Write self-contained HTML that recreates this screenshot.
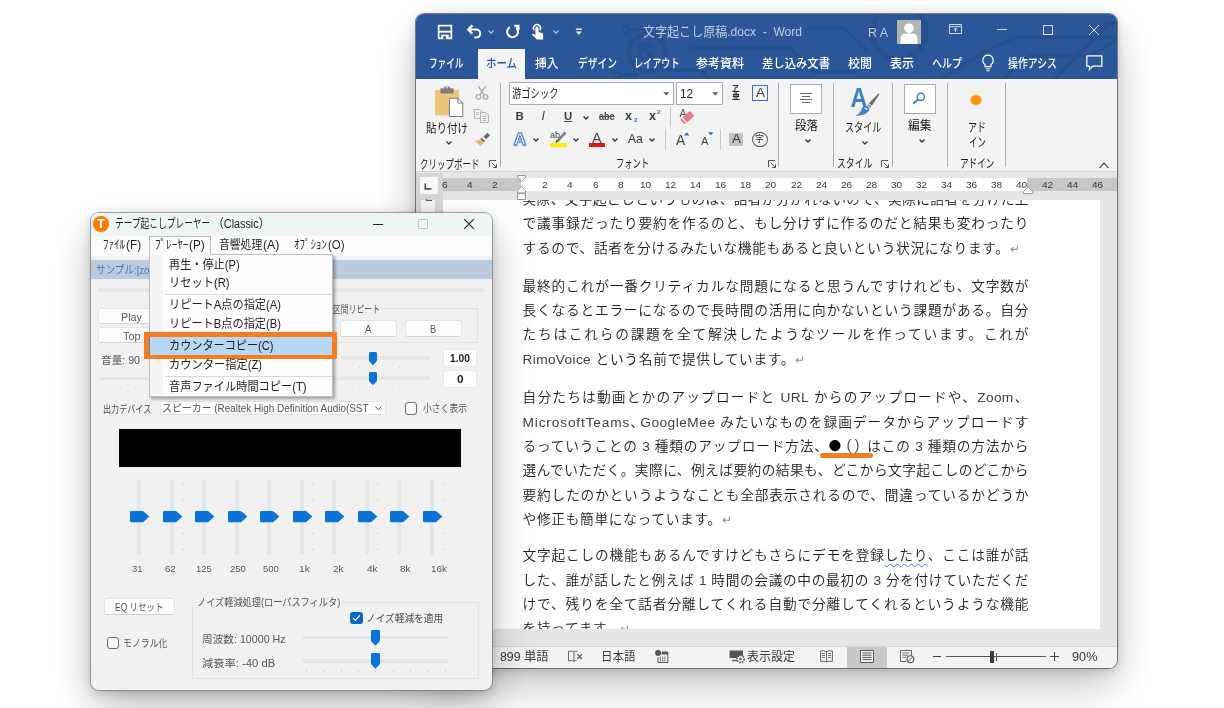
<!DOCTYPE html>
<html lang="ja"><head><meta charset="utf-8"><title>screenshot</title>
<style>
*{box-sizing:border-box;margin:0;padding:0}
html,body{width:1224px;height:708px;overflow:hidden;background:#fff}
body{position:relative;font-family:"Liberation Sans","Noto Sans CJK JP",sans-serif;font-size:12px;color:#222}
.a{position:absolute}
.t{position:absolute;height:20px;line-height:20px;white-space:nowrap;transform-origin:0 50%}
svg{overflow:visible}
#word{left:416px;top:14px;width:701px;height:654px;border-radius:8px;background:#e6e6e6;box-shadow:0 0 0 1px rgba(85,85,85,.75),0 18px 44px rgba(0,0,0,.24),0 3px 12px rgba(0,0,0,.18)}
#player{left:91px;top:213px;width:401px;height:477px;border-radius:8px;background:#f1f1f1;box-shadow:0 0 0 1px rgba(110,110,110,.6),0 18px 44px rgba(0,0,0,.26),0 3px 12px rgba(0,0,0,.2)}
.ln{position:absolute;left:522.5px;width:506px;height:24px;line-height:24px;font-size:13.7px;color:#1c1c1c;white-space:nowrap;text-align:justify;text-align-last:justify;font-weight:350;letter-spacing:0}
.ln.s{text-align-last:left;width:auto;letter-spacing:.7px}
.pm{color:#8c8c8c;font-size:12px;letter-spacing:0}
.la{color:#404040;letter-spacing:.35px}
.cj{font-family:"Noto Sans CJK JP",sans-serif;font-weight:400;color:#000;line-height:1px}
.hw{display:inline-block;width:10px;letter-spacing:0}
.wv{text-decoration:underline wavy #3a6fd8;text-decoration-thickness:1px;text-underline-offset:3px}
#wrap{position:absolute;left:0;top:0;width:1224px;height:708px;overflow:hidden;opacity:.999;will-change:transform}
</style></head><body>
<div id="wrap">
<div id="word" class="a"></div>
<div class="a" style="left:416px;top:14px;width:701.0px;height:65.0px;background:#2b579a;border-radius:8px 8px 0 0"></div>
<div class="a" style="left:416px;top:14px;width:701px;height:65px;overflow:hidden;border-radius:8px 8px 0 0"><svg class="a" style="left:0px;top:0px;" width="701" height="65" viewBox="0 0 701 65"><g fill="none" stroke="#26508f" stroke-width="3.6">
<circle cx="209.5" cy="15.5" r="3.2" stroke-width="2.6"/><path d="M214 15.5 H232" stroke-width="2.6"/>
<circle cx="231.5" cy="38.5" r="18.5" stroke-width="5"/>
<path d="M224 31 L240 47 M224 43 V31 H236" stroke-width="4.4"/>
<circle cx="276.5" cy="34" r="3.2" stroke-width="2.6"/><path d="M281 34 H374 L398 58 H440"/>
<path d="M390 14 H428 L452 38"/>
<circle cx="483" cy="18" r="27" stroke-width="5"/>
<path d="M520 68 L568 38 L600 23 H701"/>
<path d="M636 68 L692 10 H701"/>
<path d="M584 68 L614 42 H674 L701 26"/>
<circle cx="201" cy="61" r="3.2" stroke-width="2.6"/><path d="M205 61 H222 M246 56 H284 L296 68"/>
</g></svg></div>
<svg class="a" style="left:437px;top:24px;" width="16" height="16" viewBox="0 0 16 16"><rect x="1.65" y="1.65" width="12.7" height="12.7" fill="none" stroke="#fff" stroke-width="1.7"/><path d="M1.6 7.7 H14.4" stroke="#fff" stroke-width="1.9"/><rect x="4.2" y="10.6" width="7.6" height="4" fill="#fff"/><rect x="6.3" y="12.2" width="2.6" height="3" fill="#2b579a"/></svg>
<svg class="a" style="left:466px;top:24px;" width="16" height="16" viewBox="0 0 16 16"><path d="M2.4 5.6 H10.2 A4 4 0 0 1 10.2 13.6 H8.2" fill="none" stroke="#fff" stroke-width="2"/><path d="M6.4 1.4 L2.2 5.6 L6.4 9.8" fill="none" stroke="#fff" stroke-width="2.2"/></svg>
<svg class="a" style="left:486.5px;top:29px;" width="8" height="6" viewBox="0 0 8 6"><path d="M1.4 1.5 L4 4.1 L6.6 1.5" fill="none" stroke="#b9c6dd" stroke-width="1.1"/></svg>
<svg class="a" style="left:505px;top:24px;" width="16" height="16" viewBox="0 0 16 16"><path d="M4.9 3.1 A5.4 5.4 0 1 0 11.9 4.6" fill="none" stroke="#fff" stroke-width="2"/><path d="M9.2 1.7 H13.6 V6.1" fill="none" stroke="#fff" stroke-width="1.9"/><path d="M13.4 1.9 L11.2 4.6" stroke="#fff" stroke-width="1.9"/></svg>
<svg class="a" style="left:530px;top:23px;" width="16" height="18" viewBox="0 0 16 18"><path d="M5.4 5.2 A1.6 1.6 0 0 1 8.6 5.2 V9 L12 10 Q13.2 10.5 13.1 11.6 V16.6 H6.8 L2.2 11.8 Q1.8 10.8 2.8 10.8 Q3.8 10.8 5.4 12.2 Z" fill="#fff"/><path d="M4.3 7.4 A3.5 3.5 0 1 1 9.7 7.4" fill="none" stroke="#fff" stroke-width="1.4"/></svg>
<svg class="a" style="left:551.5px;top:29px;" width="8" height="6" viewBox="0 0 8 6"><path d="M1.4 1.5 L4 4.1 L6.6 1.5" fill="none" stroke="#b9c6dd" stroke-width="1.1"/></svg>
<svg class="a" style="left:575px;top:28px;" width="8" height="8" viewBox="0 0 8 8"><path d="M0.8 1.2 H6.8" stroke="#fff" stroke-width="1.3"/><path d="M0.8 3.6 H6.8 L3.8 6.8 Z" fill="#fff"/></svg>
<span class="t" style="transform:scaleX(0.9261);left:643px;top:22.0px;font-size:13px;color:#c3cde0;font-weight:400;">文字起こし原稿.docx&nbsp; -&nbsp; Word</span>
<span class="t" style="transform:scaleX(1.0339);left:868px;top:22.5px;font-size:12px;color:#c3cde0;font-weight:400;">R A</span>
<div class="a" style="left:897px;top:20px;width:24.0px;height:24.0px;background:#b3b3b3"></div>
<svg class="a" style="left:897px;top:20px;" width="24" height="24" viewBox="0 0 24 24"><circle cx="12" cy="8.2" r="4.8" fill="#fff"/><path d="M3.5 24 V19 Q3.5 13.6 9 13.6 H15 Q20.5 13.6 20.5 19 V24 Z" fill="#fff"/></svg>
<svg class="a" style="left:949px;top:24px;" width="14" height="11" viewBox="0 0 14 11"><path d="M0.5 0.5 H12.5 V9.5 H0.5 Z M0.5 2.7 H12.5" fill="none" stroke="#d5ddec" stroke-width="1"/><path d="M6.5 8 V4.3 M4.6 6 L6.5 4.2 L8.4 6" fill="none" stroke="#d5ddec" stroke-width="1"/></svg>
<div class="a" style="left:997px;top:29px;width:10.0px;height:1.0px;background:#d5ddec"></div>
<div class="a" style="left:1043px;top:25px;width:10.0px;height:10.0px;border:1px solid #d5ddec"></div>
<svg class="a" style="left:1089px;top:25px;" width="10" height="10" viewBox="0 0 10 10"><path d="M0 0 L10 10 M10 0 L0 10" stroke="#d5ddec" stroke-width="1"/></svg>
<div class="a" style="left:478px;top:49px;width:47.0px;height:30.0px;background:#f3f3f3"></div>
<span class="t" style="transform:scaleX(0.6898);left:428.5px;top:54.3px;font-size:12.5px;color:#fff;font-weight:500;">ファイル</span>
<span class="t" style="transform:scaleX(0.8347);left:485.5px;top:54.3px;font-size:12.5px;color:#2b579a;font-weight:500;">ホーム</span>
<span class="t" style="transform:scaleX(0.9394);left:535px;top:54.3px;font-size:12.5px;color:#fff;font-weight:500;">挿入</span>
<span class="t" style="transform:scaleX(0.7798);left:577.5px;top:54.3px;font-size:12.5px;color:#fff;font-weight:500;">デザイン</span>
<span class="t" style="transform:scaleX(0.7278);left:633.5px;top:54.3px;font-size:12.5px;color:#fff;font-weight:500;">レイアウト</span>
<span class="t" style="transform:scaleX(0.9597);left:696px;top:54.3px;font-size:12.5px;color:#fff;font-weight:500;">参考資料</span>
<span class="t" style="transform:scaleX(0.9065);left:762px;top:54.3px;font-size:12.5px;color:#fff;font-weight:500;">差し込み文書</span>
<span class="t" style="transform:scaleX(0.9594);left:848px;top:54.3px;font-size:12.5px;color:#fff;font-weight:500;">校閲</span>
<span class="t" style="transform:scaleX(0.9594);left:890px;top:54.3px;font-size:12.5px;color:#fff;font-weight:500;">表示</span>
<span class="t" style="transform:scaleX(0.7997);left:932px;top:54.3px;font-size:12.5px;color:#fff;font-weight:500;">ヘルプ</span>
<svg class="a" style="left:981px;top:54px;" width="14" height="19" viewBox="0 0 14 19"><path d="M7 1.2 A5.2 5.2 0 0 1 10 10.6 V12.6 H4 V10.6 A5.2 5.2 0 0 1 7 1.2 Z" fill="none" stroke="#fff" stroke-width="1.2"/><path d="M4.6 14.8 H9.4 M5.4 16.8 H8.6" stroke="#fff" stroke-width="1.1"/></svg>
<span class="t" style="transform:scaleX(0.7901);left:1008px;top:54.3px;font-size:12.5px;color:#fff;font-weight:500;">操作アシス</span>
<svg class="a" style="left:1086px;top:55px;" width="17" height="17" viewBox="0 0 17 17"><path d="M0.8 0.8 H15.8 V11.2 H6.6 L3.4 14.6 V11.2 H0.8 Z" fill="none" stroke="#fff" stroke-width="1.3"/></svg>
<div class="a" style="left:416px;top:79px;width:701.0px;height:93.0px;background:#f3f3f3;border-bottom:1px solid #d4d4d4"></div>
<div class="a" style="left:478px;top:78px;width:47.0px;height:2.0px;background:#f3f3f3"></div>
<div class="a" style="left:500px;top:83px;width:1.0px;height:84.0px;background:#adadad"></div>
<div class="a" style="left:778px;top:83px;width:1.0px;height:84.0px;background:#adadad"></div>
<div class="a" style="left:833px;top:83px;width:1.0px;height:84.0px;background:#adadad"></div>
<div class="a" style="left:892px;top:83px;width:1.0px;height:84.0px;background:#adadad"></div>
<div class="a" style="left:947px;top:83px;width:1.0px;height:84.0px;background:#adadad"></div>
<div class="a" style="left:1005px;top:83px;width:1.0px;height:84.0px;background:#adadad"></div>
<svg class="a" style="left:435px;top:86px;" width="29" height="31" viewBox="0 0 29 31"><path d="M0 4 H24 V29.5 H0 Z" fill="#ecc57d"/>
<path d="M5.5 2.4 H18.7 V7.4 H5.5 Z" fill="#7a7a7a"/><path d="M9.4 0.6 H14.8 V3 H9.4 Z" fill="#7a7a7a"/><path d="M11 1.8 H13.2" stroke="#f3f3f3" stroke-width="1"/>
<path d="M14.5 12.3 H23 L27.8 17.1 V30.5 H14.5 Z" fill="#fff" stroke="#7a7a7a" stroke-width="1"/><path d="M23 12.3 V17.1 H27.8" fill="none" stroke="#7a7a7a" stroke-width="1"/></svg>
<span class="t" style="transform:scaleX(0.8397);left:426px;top:119.0px;font-size:12.5px;color:#1c1c1c;font-weight:400;">貼り付け</span>
<svg class="a" style="left:444.5px;top:139.5px;" width="8" height="6" viewBox="0 0 8 6"><path d="M1.5 1.5 L4 4.0 L6.5 1.5" fill="none" stroke="#333" stroke-width="1.35"/></svg>
<svg class="a" style="left:475px;top:85px;" width="14" height="15" viewBox="0 0 14 15"><path d="M3.2 0.8 L9.2 10 M10.8 0.8 L4.8 10" stroke="#a6a6a6" stroke-width="1.3" fill="none"/><circle cx="3.4" cy="11.8" r="2.3" fill="none" stroke="#a6a6a6" stroke-width="1.2"/><circle cx="10.6" cy="11.8" r="2.3" fill="none" stroke="#a6a6a6" stroke-width="1.2"/></svg>
<svg class="a" style="left:474px;top:109px;" width="16" height="14" viewBox="0 0 16 14"><path d="M0.5 0.5 H5.5 L8 3 V9.5 H0.5 Z" fill="#f3f3f3" stroke="#b0b0b0"/><path d="M6.5 3.5 H11.5 L14.5 6.5 V13.5 H6.5 Z" fill="#f3f3f3" stroke="#b0b0b0"/><path d="M2 3.5 H5 M2 5.5 H5 M8.5 7.5 H12.5 M8.5 9.5 H12.5 M8.5 11.5 H12.5" stroke="#b0b0b0" stroke-width=".9"/></svg>
<svg class="a" style="left:474px;top:132px;" width="17" height="15" viewBox="0 0 17 15"><path d="M9.5 4.5 L13.5 0.8 L16 3.4 L12.2 7.2 Z" fill="#6b6b6b"/><path d="M7.8 5.6 L11.2 9 L9.6 10.6 L6.2 7.2 Z" fill="#6b6b6b"/><path d="M5.6 7.4 L9.4 11.2 L6.6 14.2 L0.6 8.6 L4 8.8 Z" fill="#e3b76a"/></svg>
<span class="t" style="transform:scaleX(0.7082);left:419.5px;top:154.6px;font-size:12px;color:#1c1c1c;font-weight:400;">クリップボード</span>
<svg class="a" style="left:489px;top:160px;" width="8" height="8" viewBox="0 0 8 8"><path d="M0.5 7 V0.5 H7" fill="none" stroke="#555" stroke-width="1"/><path d="M3 3 L7.2 7.2 M7.5 4.2 V7.5 H4.2" fill="none" stroke="#555" stroke-width="1"/></svg>
<div class="a" style="left:509px;top:82px;width:165.0px;height:23.0px;background:#fff;border:1px solid #ababab"></div>
<span class="t" style="transform:scaleX(0.7748);left:511.5px;top:83.6px;font-size:12px;color:#1c1c1c;font-weight:400;">游ゴシック</span>
<svg class="a" style="left:663px;top:92px;" width="7" height="4" viewBox="0 0 7 4"><path d="M0.3 0.3 H6.3 L3.3 3.5 Z" fill="#555"/></svg>
<div class="a" style="left:676px;top:82px;width:47.0px;height:23.0px;background:#fff;border:1px solid #ababab"></div>
<span class="t" style="transform:scaleX(0.9348);left:679.5px;top:83.8px;font-size:12.5px;color:#1c1c1c;font-weight:400;">12</span>
<svg class="a" style="left:712px;top:92px;" width="7" height="4" viewBox="0 0 7 4"><path d="M0.3 0.3 H6.3 L3.3 3.5 Z" fill="#555"/></svg>
<span class="t" style="transform:scaleX(0.9067);left:731.8px;top:78.6px;font-size:7.5px;color:#2a2a2a;font-weight:700;">ア</span>
<span class="t" style="transform:scaleX(0.8873);left:731.6px;top:86.2px;font-size:9px;color:#2a2a2a;font-weight:700;">亜</span>
<div class="a" style="left:752px;top:85px;width:16.0px;height:15.5px;border:1px solid #3e6db5;background:#f7f7f7"></div>
<span class="t" style="transform:scaleX(1.0378);left:755.5px;top:83.0px;font-size:13px;color:#3b3b3b;font-weight:400;">A</span>
<span class="t" style="transform:scaleX(1.0000);left:515.4px;top:106.0px;font-size:11.5px;color:#404040;font-weight:700;">B</span>
<span class="t" style="transform:scaleX(1.0000);left:541.6px;top:106.0px;font-size:12.5px;color:#404040;font-weight:400;font-style:italic;">I</span>
<span class="t" style="transform:scaleX(0.9865);left:563.6px;top:105.6px;font-size:11.5px;color:#404040;font-weight:700;text-decoration:underline;text-underline-offset:1.2px;text-decoration-thickness:1px;">U</span>
<svg class="a" style="left:581.5px;top:114.5px;" width="8" height="6" viewBox="0 0 8 6"><path d="M1.5 1.5 L4 4.0 L6.5 1.5" fill="none" stroke="#333" stroke-width="1.35"/></svg>
<span class="t" style="transform:scaleX(0.8511);left:599.4px;top:106.4px;font-size:10.5px;color:#4a4a4a;font-weight:700;text-decoration:line-through;text-decoration-thickness:1px;">abc</span>
<span class="t" style="transform:scaleX(1.0067);left:625px;top:106.4px;font-size:12.5px;color:#3b3b3b;font-weight:700;">x</span>
<span class="t" style="transform:scaleX(1.1755);left:633.8px;top:110.0px;font-size:5.5px;color:#2e75c8;font-weight:700;">2</span>
<span class="t" style="transform:scaleX(1.0067);left:649px;top:106.4px;font-size:12.5px;color:#3b3b3b;font-weight:700;">x</span>
<span class="t" style="transform:scaleX(1.1755);left:657.4px;top:101.6px;font-size:5.5px;color:#2e75c8;font-weight:700;">2</span>
<div class="a" style="left:670px;top:106.5px;width:1.0px;height:20.5px;background:#c8c8c8"></div>
<svg class="a" style="left:679px;top:108px;" width="16" height="17" viewBox="0 0 16 17"><text x="0.4" y="8.6" font-size="10.5" font-family="Liberation Sans,sans-serif" fill="#555">A</text><g transform="rotate(-40 8.2 9.6)"><rect x="1.6" y="6.2" width="13.2" height="6.8" rx="1.2" fill="#e8798f"/><rect x="3.6" y="6.2" width="1.3" height="6.8" fill="#f3f3f3"/></g></svg>
<svg class="a" style="left:512px;top:130px;" width="16" height="18" viewBox="0 0 16 18"><text x="8" y="14.6" text-anchor="middle" font-size="17" font-family="Liberation Sans,sans-serif" font-weight="700" fill="none" stroke="#b9d5f4" stroke-width="2.6" stroke-linejoin="round">A</text><text x="8" y="14.6" text-anchor="middle" font-size="17" font-family="Liberation Sans,sans-serif" font-weight="700" fill="#fff" stroke="#2f72c4" stroke-width="0.85" stroke-linejoin="round">A</text></svg>
<svg class="a" style="left:531.5px;top:136.8px;" width="8" height="6" viewBox="0 0 8 6"><path d="M1.5 1.5 L4 4.0 L6.5 1.5" fill="none" stroke="#333" stroke-width="1.35"/></svg>
<span class="t" style="transform:scaleX(0.9453);left:550px;top:125.0px;font-size:9.5px;color:#444;font-weight:400;">ab</span>
<svg class="a" style="left:553px;top:130px;" width="15" height="13" viewBox="0 0 15 13"><path d="M11.6 1.6 L13.4 3.2 L5.6 11.8 L3 12.2 L3.6 10 Z" fill="#7a7a7a"/><path d="M3.6 10 L5.6 11.8 L2.2 13 Z" fill="#555"/></svg>
<div class="a" style="left:550px;top:143px;width:16.5px;height:4.0px;background:#ffee00"></div>
<svg class="a" style="left:571.5px;top:136.8px;" width="8" height="6" viewBox="0 0 8 6"><path d="M1.5 1.5 L4 4.0 L6.5 1.5" fill="none" stroke="#333" stroke-width="1.35"/></svg>
<span class="t" style="transform:scaleX(1.0274);left:592.4px;top:127.8px;font-size:14px;color:#444;font-weight:400;">A</span>
<div class="a" style="left:588.5px;top:143px;width:16.5px;height:4.0px;background:#e8111a"></div>
<svg class="a" style="left:610.5px;top:136.8px;" width="8" height="6" viewBox="0 0 8 6"><path d="M1.5 1.5 L4 4.0 L6.5 1.5" fill="none" stroke="#333" stroke-width="1.35"/></svg>
<span class="t" style="transform:scaleX(0.9741);left:628.1px;top:128.8px;font-size:12.5px;color:#3a3a3a;font-weight:400;">Aa</span>
<svg class="a" style="left:647.8px;top:136.8px;" width="8" height="6" viewBox="0 0 8 6"><path d="M1.5 1.5 L4 4.0 L6.5 1.5" fill="none" stroke="#333" stroke-width="1.35"/></svg>
<div class="a" style="left:665px;top:129px;width:1.0px;height:21.0px;background:#c8c8c8"></div>
<span class="t" style="transform:scaleX(0.9846);left:676.2px;top:129.8px;font-size:14px;color:#444;font-weight:400;">A</span>
<svg class="a" style="left:683.8px;top:131.6px;" width="6" height="4" viewBox="0 0 6 4"><path d="M0 3.6 L2.8 0.2 L5.6 3.6 Z" fill="#2e75c8"/></svg>
<span class="t" style="transform:scaleX(0.9776);left:701px;top:130.8px;font-size:11.5px;color:#444;font-weight:400;">A</span>
<svg class="a" style="left:707.5px;top:132px;" width="6" height="4" viewBox="0 0 6 4"><path d="M0 0.2 H5.6 L2.8 3.6 Z" fill="#2e75c8"/></svg>
<div class="a" style="left:720px;top:129px;width:1.0px;height:21.0px;background:#c8c8c8"></div>
<div class="a" style="left:729px;top:132.5px;width:14.0px;height:13.0px;background:#c2c2c2"></div>
<span class="t" style="transform:scaleX(0.9983);left:731.5px;top:129.2px;font-size:13.5px;color:#3b3b3b;font-weight:400;">A</span>
<div class="a" style="left:752px;top:131.8px;width:15.5px;height:15.4px;border:1px solid #555;border-radius:50%"></div>
<span class="t" style="transform:scaleX(0.9983);left:755.3px;top:129.3px;font-size:9px;color:#333;font-weight:400;">字</span>
<span class="t" style="transform:scaleX(0.6873);left:615.5px;top:153.5px;font-size:12px;color:#1c1c1c;font-weight:400;">フォント</span>
<svg class="a" style="left:767.5px;top:160px;" width="8" height="8" viewBox="0 0 8 8"><path d="M0.5 7 V0.5 H7" fill="none" stroke="#555" stroke-width="1"/><path d="M3 3 L7.2 7.2 M7.5 4.2 V7.5 H4.2" fill="none" stroke="#555" stroke-width="1"/></svg>
<div class="a" style="left:790px;top:83.5px;width:32.0px;height:30.5px;background:#fff;border:1px solid #ababab"></div>
<svg class="a" style="left:799px;top:92px;" width="14" height="12" viewBox="0 0 14 12"><path d="M1 1.5 H13 M3 4.5 H11 M1 7.5 H13 M3 10.5 H11" stroke="#666" stroke-width="1"/></svg>
<span class="t" style="transform:scaleX(0.9194);left:794.5px;top:115.6px;font-size:12.5px;color:#1c1c1c;font-weight:400;">段落</span>
<svg class="a" style="left:803.5px;top:138px;" width="8" height="6" viewBox="0 0 8 6"><path d="M1.5 1.5 L4 4.0 L6.5 1.5" fill="none" stroke="#333" stroke-width="1.35"/></svg>
<svg class="a" style="left:850px;top:86px;" width="30" height="31" viewBox="0 0 30 31"><text transform="translate(0.6,20.6) scale(.86,1)" font-size="27" font-weight="700" font-family="Liberation Sans,sans-serif" fill="#3f7fc6">A</text>
<path d="M28.6 7.2 L29.4 8.6 L22 19.6 L18.6 17.4 Z" fill="#6e6e6e"/><path d="M18.3 17.9 L21.7 20.1 L20.2 22.2 L16.8 20 Z" fill="#a0a0a0"/>
<path d="M16.9 20.4 Q20.6 22 18.6 25.2 Q15 29.6 5.4 30 Q10.4 27.2 11.4 23.6 Q12.8 19.2 16.9 20.4 Z" fill="#3f7fc6"/><path d="M14.4 22.2 Q16.6 22 17.2 24" fill="none" stroke="#fff" stroke-width="1.1"/></svg>
<span class="t" style="transform:scaleX(0.7298);left:844.5px;top:118.0px;font-size:12.5px;color:#1c1c1c;font-weight:400;">スタイル</span>
<svg class="a" style="left:860.5px;top:139.5px;" width="8" height="6" viewBox="0 0 8 6"><path d="M1.5 1.5 L4 4.0 L6.5 1.5" fill="none" stroke="#333" stroke-width="1.35"/></svg>
<span class="t" style="transform:scaleX(0.7393);left:837px;top:153.5px;font-size:12px;color:#1c1c1c;font-weight:400;">スタイル</span>
<svg class="a" style="left:881px;top:160px;" width="8" height="8" viewBox="0 0 8 8"><path d="M0.5 7 V0.5 H7" fill="none" stroke="#555" stroke-width="1"/><path d="M3 3 L7.2 7.2 M7.5 4.2 V7.5 H4.2" fill="none" stroke="#555" stroke-width="1"/></svg>
<div class="a" style="left:904px;top:83.5px;width:32.0px;height:30.5px;background:#fff;border:1px solid #ababab"></div>
<svg class="a" style="left:912px;top:92px;" width="14" height="13" viewBox="0 0 14 13"><circle cx="8.8" cy="4.8" r="3.6" fill="none" stroke="#3f7fc6" stroke-width="1.5"/><path d="M6.2 7.4 L1.2 11.6" stroke="#3f7fc6" stroke-width="2"/></svg>
<span class="t" style="transform:scaleX(0.9394);left:908px;top:115.6px;font-size:12.5px;color:#1c1c1c;font-weight:400;">編集</span>
<svg class="a" style="left:917.5px;top:138px;" width="8" height="6" viewBox="0 0 8 6"><path d="M1.5 1.5 L4 4.0 L6.5 1.5" fill="none" stroke="#333" stroke-width="1.35"/></svg>
<div class="a" style="left:970px;top:94px;width:12.0px;height:12.0px;background:radial-gradient(circle,#ff9300 0,#ff9300 52%,rgba(255,147,0,0) 72%);"></div>
<span class="t" style="transform:scaleX(0.7196);left:968px;top:117.7px;font-size:12.5px;color:#1c1c1c;font-weight:400;">アド</span>
<span class="t" style="transform:scaleX(0.6796);left:968.5px;top:132.5px;font-size:12.5px;color:#1c1c1c;font-weight:400;">イン</span>
<span class="t" style="transform:scaleX(0.7185);left:959.5px;top:153.5px;font-size:12px;color:#1c1c1c;font-weight:400;">アドイン</span>
<svg class="a" style="left:1099px;top:162px;" width="10" height="7" viewBox="0 0 10 7"><path d="M0.6 5.8 L5 1.2 L9.4 5.8" fill="none" stroke="#444" stroke-width="1.2"/></svg>
<div class="a" style="left:416px;top:172px;width:701.0px;height:28.0px;background:#e6e6e6"></div>
<div class="a" style="left:416px;top:172.5px;width:26.5px;height:472.5px;background:#d6d6d6"></div>
<div class="a" style="left:419.5px;top:176.5px;width:18.0px;height:17.0px;background:#f8f8f8"></div>
<svg class="a" style="left:424px;top:183px;" width="8" height="8" viewBox="0 0 8 8"><path d="M1.3 0.2 V5.8 H7.4" fill="none" stroke="#555" stroke-width="1.7"/></svg>
<div class="a" style="left:421px;top:200px;width:14.0px;height:445.0px;background:#f4f4f4"></div>
<div class="a" style="left:426px;top:200.2px;width:6.0px;height:1.2px;background:#555"></div>
<div class="a" style="left:425.5px;top:199px;width:1.5px;height:1.4px;background:#666"></div>
<div class="a" style="left:443px;top:178.3px;width:78.0px;height:12.5px;background:#c6c6c6"></div>
<div class="a" style="left:521px;top:178.3px;width:506.0px;height:12.5px;background:#fff"></div>
<div class="a" style="left:1027px;top:178.3px;width:90.0px;height:12.5px;background:#c6c6c6"></div>
<span class="t" style="transform:scaleX(1.0269);left:441.9px;top:175.0px;font-size:9.8px;color:#383838;font-weight:400;">6</span>
<span class="t" style="transform:scaleX(1.0269);left:467.0px;top:175.0px;font-size:9.8px;color:#383838;font-weight:400;">4</span>
<span class="t" style="transform:scaleX(1.0269);left:492.1px;top:175.0px;font-size:9.8px;color:#383838;font-weight:400;">2</span>
<span class="t" style="transform:scaleX(1.0269);left:542.3px;top:175.0px;font-size:9.8px;color:#383838;font-weight:400;">2</span>
<span class="t" style="transform:scaleX(1.0269);left:567.4px;top:175.0px;font-size:9.8px;color:#383838;font-weight:400;">4</span>
<span class="t" style="transform:scaleX(1.0269);left:592.5px;top:175.0px;font-size:9.8px;color:#383838;font-weight:400;">6</span>
<span class="t" style="transform:scaleX(1.0269);left:617.6px;top:175.0px;font-size:9.8px;color:#383838;font-weight:400;">8</span>
<span class="t" style="transform:scaleX(1.0269);left:639.9px;top:175.0px;font-size:9.8px;color:#383838;font-weight:400;">10</span>
<span class="t" style="transform:scaleX(1.0269);left:665.0px;top:175.0px;font-size:9.8px;color:#383838;font-weight:400;">12</span>
<span class="t" style="transform:scaleX(1.0269);left:690.1px;top:175.0px;font-size:9.8px;color:#383838;font-weight:400;">14</span>
<span class="t" style="transform:scaleX(1.0269);left:715.2px;top:175.0px;font-size:9.8px;color:#383838;font-weight:400;">16</span>
<span class="t" style="transform:scaleX(1.0269);left:740.3px;top:175.0px;font-size:9.8px;color:#383838;font-weight:400;">18</span>
<span class="t" style="transform:scaleX(1.0269);left:765.4px;top:175.0px;font-size:9.8px;color:#383838;font-weight:400;">20</span>
<span class="t" style="transform:scaleX(1.0269);left:790.5px;top:175.0px;font-size:9.8px;color:#383838;font-weight:400;">22</span>
<span class="t" style="transform:scaleX(1.0269);left:815.6px;top:175.0px;font-size:9.8px;color:#383838;font-weight:400;">24</span>
<span class="t" style="transform:scaleX(1.0269);left:840.7px;top:175.0px;font-size:9.8px;color:#383838;font-weight:400;">26</span>
<span class="t" style="transform:scaleX(1.0269);left:865.8px;top:175.0px;font-size:9.8px;color:#383838;font-weight:400;">28</span>
<span class="t" style="transform:scaleX(1.0269);left:890.9px;top:175.0px;font-size:9.8px;color:#383838;font-weight:400;">30</span>
<span class="t" style="transform:scaleX(1.0269);left:916.0px;top:175.0px;font-size:9.8px;color:#383838;font-weight:400;">32</span>
<span class="t" style="transform:scaleX(1.0269);left:941.1px;top:175.0px;font-size:9.8px;color:#383838;font-weight:400;">34</span>
<span class="t" style="transform:scaleX(1.0269);left:966.2px;top:175.0px;font-size:9.8px;color:#383838;font-weight:400;">36</span>
<span class="t" style="transform:scaleX(1.0269);left:991.3px;top:175.0px;font-size:9.8px;color:#383838;font-weight:400;">38</span>
<span class="t" style="transform:scaleX(1.0269);left:1016.4px;top:175.0px;font-size:9.8px;color:#383838;font-weight:400;">40</span>
<span class="t" style="transform:scaleX(1.0269);left:1041.5px;top:175.0px;font-size:9.8px;color:#383838;font-weight:400;">42</span>
<span class="t" style="transform:scaleX(1.0269);left:1066.6px;top:175.0px;font-size:9.8px;color:#383838;font-weight:400;">44</span>
<span class="t" style="transform:scaleX(1.0269);left:1091.7px;top:175.0px;font-size:9.8px;color:#383838;font-weight:400;">46</span>
<svg class="a" style="left:516.5px;top:175px;" width="9" height="25" viewBox="0 0 9 25"><path d="M0.5 0.5 H8.5 V2 L4.5 6.6 L0.5 2 Z" fill="#fff" stroke="#8a8a8a" stroke-width=".9"/><path d="M4.5 11.4 L8.5 15.6 V18 H0.5 V15.6 Z" fill="#fff" stroke="#8a8a8a" stroke-width=".9"/><path d="M0.5 18.6 H8.5 V24.5 H0.5 Z" fill="#fff" stroke="#8a8a8a" stroke-width=".9"/></svg>
<svg class="a" style="left:1023.3px;top:186.3px;" width="11" height="9" viewBox="0 0 11 9"><path d="M5.2 0.8 L9.8 5.4 V7.6 H0.6 V5.4 Z" fill="#fff" stroke="#8a8a8a" stroke-width=".9"/></svg>
<div class="a" style="left:443px;top:200px;width:657.0px;height:428.5px;background:#fff"></div>
<div class="a" style="left:437px;top:200px;width:663px;height:428.5px;overflow:hidden">
<div class="ln" style="left:85.5px;top:-12.1px">実際、文字起こしというものは、話者が分かれないので、実際に話者を分けた上</div>
<div class="ln" style="left:85.5px;top:12.3px">で議事録だったり要約を作るのと、もし分けずに作るのだと結果も変わったり</div>
<div class="ln s" style="left:85.5px;top:36.9px">するので、話者を分けるみたいな機能もあると良いという状況になります。<span class="pm">↵</span></div>
<div class="ln" style="left:85.5px;top:75.0px">最終的これが一番クリティカルな問題になると思うんですけれども、文字数が</div>
<div class="ln" style="left:85.5px;top:98.6px">長くなるとエラーになるので長時間の活用に向かないという課題がある。自分</div>
<div class="ln" style="left:85.5px;top:123.2px">たちはこれらの課題を全て解決したようなツールを作っています。これが</div>
<div class="ln s" style="left:85.5px;top:148.0px"><span class="la">RimoVoice</span> という名前で提供しています。<span class="pm">↵</span></div>
<div class="ln" style="left:85.5px;top:186.4px">自分たちは動画とかのアップロードと <span class="la">URL</span> からのアップロードや、<span class="la">Zoom</span>、</div>
<div class="ln" style="left:85.5px;top:210.5px"><span class="la" style="letter-spacing:.85px">MicrosoftTeams</span><span class="hw">、</span><span class="la" style="letter-spacing:.5px">GoogleMee</span> みたいなものを録画データからアップロードす</div>
<div class="ln" style="left:85.5px;top:234.8px">るっていうことの <span class="la">3</span> 種類のアップロード方法、<span class="cj" style="font-size:12.4px">●</span> <span class="la" style="letter-spacing:3px;color:#555;font-size:15px;line-height:1px;position:relative;top:-.5px">()</span> はこの <span class="la">3</span> 種類の方法から</div>
<div class="ln" style="left:85.5px;top:259.3px">選んでいただく。実際に、例えば要約の結果も、どこから文字起こしのどこから</div>
<div class="ln" style="left:85.5px;top:283.6px">要約したのかというようなことも全部表示されるので、間違っているかどうか</div>
<div class="ln s" style="left:85.5px;top:307.5px">や修正も簡単になっています。<span class="pm">↵</span></div>
<div class="ln" style="left:85.5px;top:344.3px">文字起こしの機能もあるんですけどもさらにデモを登録<span class="wv">したり</span>、ここは誰が話</div>
<div class="ln" style="left:85.5px;top:368.5px">した、誰が話したと例えば <span class="la">1</span> 時間の会議の中の最初の <span class="la">3</span> 分を付けていただくだ</div>
<div class="ln" style="left:85.5px;top:392.6px">けで、残りを全て話者分離してくれる自動で分離してくれるというような機能</div>
<div class="ln s" style="left:85.5px;top:416.9px">を持ってます。<span class="pm">↵</span></div>
</div>
<div class="a" style="left:820px;top:453.2px;width:52.5px;height:4.4px;background:#f47d20;border-radius:2.2px"></div>
<div class="a" style="left:416px;top:646px;width:701.0px;height:22.0px;background:#f3f3f3;border-top:1px solid #d6d6d6;border-radius:0 0 8px 8px"></div>
<span class="t" style="transform:scaleX(0.9829);left:500px;top:646.5px;font-size:12.5px;color:#3a3a3a;font-weight:400;">899 単語</span>
<svg class="a" style="left:568px;top:650px;" width="15" height="13" viewBox="0 0 15 13"><path d="M0.5 1.2 H4.6 Q6 1.2 6 2.4 V11.6 Q6 10.6 4.6 10.6 H0.5 Z" fill="none" stroke="#666" stroke-width="1"/><path d="M6 2.4 Q6 1.2 7.4 1.2 H9.6" fill="none" stroke="#666" stroke-width="1"/><path d="M6 11.6 Q6 10.6 7.4 10.6 H8.6" fill="none" stroke="#666" stroke-width="1"/><path d="M9.4 4.2 L13.8 9 M13.8 4.2 L9.4 9" stroke="#555" stroke-width="1.2"/></svg>
<span class="t" style="transform:scaleX(0.9196);left:601px;top:646.5px;font-size:12.5px;color:#3a3a3a;font-weight:400;">日本語</span>
<svg class="a" style="left:655px;top:650px;" width="14" height="13" viewBox="0 0 14 13"><circle cx="3.1" cy="3.1" r="3" fill="#555"/><path d="M3 7 V12.5 H12.8 V2 H7" fill="none" stroke="#555" stroke-width="1"/><path d="M7 2 H12.8 V4.6 H6.4" fill="#555"/><path d="M4.8 7.2 H11.4 M4.8 9 H11.4 M4.8 10.8 H11.4" stroke="#555" stroke-width="1" stroke-dasharray="1.3 0.9"/></svg>
<svg class="a" style="left:729px;top:650px;" width="17" height="14" viewBox="0 0 17 14"><path d="M0.5 0.5 H14 V8 H0.5 Z" fill="#555"/><path d="M3 10.5 H8" stroke="#555" stroke-width="1.4"/><circle cx="11.5" cy="9" r="3.6" fill="#f3f3f3" stroke="#555" stroke-width="1.6" stroke-dasharray="1.6 1.1"/><circle cx="11.5" cy="9" r="1.3" fill="#555"/></svg>
<span class="t" style="transform:scaleX(0.9597);left:747px;top:646.8px;font-size:12.5px;color:#3a3a3a;font-weight:400;">表示設定</span>
<svg class="a" style="left:820px;top:650px;" width="14" height="13" viewBox="0 0 14 13"><path d="M6.5 1.6 Q3.6 0.2 0.6 1 V11.4 Q3.6 10.6 6.5 12 Q9.4 10.6 12.4 11.4 V1 Q9.4 0.2 6.5 1.6 Z M6.5 1.6 V12" fill="none" stroke="#666" stroke-width="1"/><path d="M2 3.5 H5 M2 5.5 H5 M2 7.5 H5 M8 3.5 H11 M8 5.5 H11 M8 7.5 H11" stroke="#666" stroke-width=".9"/></svg>
<div class="a" style="left:847px;top:647px;width:40.0px;height:21.0px;background:#c8c8c8"></div>
<svg class="a" style="left:860px;top:650px;" width="14" height="13" viewBox="0 0 14 13"><path d="M0.5 0.5 H13.5 V12.5 H0.5 Z" fill="#f3f3f3" stroke="#555" stroke-width="1"/><path d="M2.5 3 H11.5 M2.5 5.2 H11.5 M2.5 7.4 H11.5 M2.5 9.6 H11.5" stroke="#555" stroke-width="1"/></svg>
<svg class="a" style="left:900px;top:650px;" width="15" height="13" viewBox="0 0 15 13"><path d="M0.5 0.5 H11.5 V6 M0.5 0.5 V11.5 H6" fill="none" stroke="#666" stroke-width="1"/><path d="M2.5 3 H9.5 M2.5 5.2 H8 M2.5 7.4 H6" stroke="#666" stroke-width=".9"/><circle cx="10.4" cy="9.2" r="3.4" fill="#f3f3f3" stroke="#555" stroke-width="1.1"/><path d="M8 11.4 L12.8 7" stroke="#555" stroke-width="1"/></svg>
<div class="a" style="left:933px;top:656px;width:7.5px;height:1.0px;background:#444"></div>
<div class="a" style="left:946px;top:656px;width:100.0px;height:1.0px;background:#555"></div>
<div class="a" style="left:996px;top:652.5px;width:1.0px;height:8.0px;background:#555"></div>
<div class="a" style="left:989.5px;top:650.5px;width:4.5px;height:12.0px;background:#3c3c3c"></div>
<div class="a" style="left:1050px;top:656px;width:9.0px;height:1.0px;background:#444"></div>
<div class="a" style="left:1054px;top:652px;width:1.0px;height:9.0px;background:#444"></div>
<span class="t" style="transform:scaleX(1.0187);left:1071.5px;top:646.8px;font-size:12.5px;color:#3a3a3a;font-weight:400;">90%</span><div id="player" class="a"></div>
<div class="a" style="left:91px;top:213px;width:401.0px;height:23.0px;background:#eef6f3;border-radius:8px 8px 0 0"></div>
<div class="a" style="left:93.4px;top:216.2px;width:15.4px;height:15.4px;background:#ff7a00;border-radius:50%"></div>
<span class="t" style="transform:scaleX(1.0209);left:97.2px;top:214.2px;font-size:12.5px;color:#fff;font-weight:700;">T</span>
<span class="t" style="transform:scaleX(0.6968);left:115px;top:214.4px;font-size:12.5px;color:#1a1a1a;font-weight:400;">テープ起こしプレーヤー</span>
<span class="t" style="transform:scaleX(0.8653);left:212.5px;top:214.4px;font-size:12.5px;color:#1a1a1a;font-weight:400;">（Classic）</span>
<div class="a" style="left:373px;top:223.7px;width:10.2px;height:1.1px;background:#222"></div>
<div class="a" style="left:418px;top:219.3px;width:9.6px;height:9.3px;border:1px solid #c4c4c4;border-radius:1px"></div>
<svg class="a" style="left:464px;top:219px;" width="10" height="10" viewBox="0 0 10 10"><path d="M0.2 0.2 L9.8 9.8 M9.8 0.2 L0.2 9.8" stroke="#222" stroke-width="1.1"/></svg>
<div class="a" style="left:91px;top:236px;width:401.0px;height:19.5px;background:#fbfbfb"></div>
<span class="t" style="transform:scaleX(0.9161);left:103px;top:235.0px;font-size:12px;color:#1f1f1f;font-weight:400;">ﾌｧｲﾙ</span>
<span class="t" style="transform:scaleX(0.9456);left:125.9px;top:235.0px;font-size:12.5px;color:#1f1f1f;font-weight:400;">(F)</span>
<span class="t" style="transform:scaleX(0.8997);left:218.5px;top:235.0px;font-size:12px;color:#1f1f1f;font-weight:400;">音響処理</span>
<span class="t" style="transform:scaleX(0.9837);left:262.6px;top:235.0px;font-size:12.5px;color:#1f1f1f;font-weight:400;">(A)</span>
<span class="t" style="transform:scaleX(0.9163);left:293.7px;top:235.0px;font-size:12px;color:#1f1f1f;font-weight:400;">ｵﾌﾟｼｮﾝ</span>
<span class="t" style="transform:scaleX(0.9135);left:327.6px;top:235.0px;font-size:12.5px;color:#1f1f1f;font-weight:400;">(O)</span>
<div class="a" style="left:91px;top:259.6px;width:401.0px;height:19.2px;background:#bccbdc"></div>
<span class="t" style="transform:scaleX(0.8317);left:95.6px;top:259.7px;font-size:11.5px;color:#3b7bd0;font-weight:400;">サンプル:[zo</span>
<div class="a" style="left:97.4px;top:287.6px;width:386.2px;height:4.0px;background:#e3e6e7;border-radius:2px"></div>
<div class="a" style="left:97.5px;top:308.3px;width:102.5px;height:15.9px;background:#fdfdfd;border:1px solid #e3e3e3;border-bottom-color:#d2d2d2;border-radius:3.5px"></div>
<span class="t" style="transform:scaleX(1.0275);left:120.5px;top:307.2px;font-size:10.5px;color:#555;font-weight:400;">Play</span>
<div class="a" style="left:97.5px;top:327.2px;width:102.5px;height:16.2px;background:#fdfdfd;border:1px solid #e3e3e3;border-bottom-color:#d2d2d2;border-radius:3.5px"></div>
<span class="t" style="transform:scaleX(1.0332);left:122.5px;top:325.6px;font-size:10.5px;color:#555;font-weight:400;">Top</span>
<span class="t" style="transform:scaleX(1.0126);left:100.5px;top:350.2px;font-size:10.5px;color:#555;font-weight:400;">音量: 90</span>
<div class="a" style="left:100px;top:376.6px;width:240.0px;height:3.8px;background:#e3e6e7;border-radius:2px"></div>
<div class="a" style="left:105.0px;top:388.3px;width:1.0px;height:1.0px;background:#cfcfcf"></div>
<div class="a" style="left:120.2px;top:388.3px;width:1.0px;height:1.0px;background:#cfcfcf"></div>
<div class="a" style="left:135.4px;top:388.3px;width:1.0px;height:1.0px;background:#cfcfcf"></div>
<div class="a" style="left:150.6px;top:388.3px;width:1.0px;height:1.0px;background:#cfcfcf"></div>
<div class="a" style="left:330px;top:308.3px;width:147.5px;height:34.9px;border:1px solid #e2e2e2"></div>
<div class="a" style="left:331px;top:300px;width:51.0px;height:16.0px;background:#f0f0f0"></div>
<span class="t" style="transform:scaleX(0.7460);left:333px;top:298.6px;font-size:10.5px;color:#555;font-weight:400;">区間リピート</span>
<div class="a" style="left:340.3px;top:319.8px;width:57.1px;height:17.6px;background:#fdfdfd;border:1px solid #e3e3e3;border-bottom-color:#d2d2d2;border-radius:3.5px"></div>
<span class="t" style="transform:scaleX(0.9265);left:364.5px;top:319.0px;font-size:10.5px;color:#555;font-weight:400;">A</span>
<div class="a" style="left:405.2px;top:319.8px;width:57.2px;height:17.6px;background:#fdfdfd;border:1px solid #e3e3e3;border-bottom-color:#d2d2d2;border-radius:3.5px"></div>
<span class="t" style="transform:scaleX(0.8837);left:429.8px;top:319.0px;font-size:10.5px;color:#555;font-weight:400;">B</span>
<div class="a" style="left:340px;top:356px;width:91.0px;height:3.6px;background:#e3e6e7;border-radius:2px"></div>
<svg class="a" style="left:368.8px;top:351.7px;" width="8" height="13.4" viewBox="0 0 8 13.4"><path d="M0 1.5 Q0 0 1.5 0 H6.5 Q8 0 8 1.5 V9 L4 13.2 L0 9 Z" fill="#0a73d8"/></svg>
<div class="a" style="left:345.5px;top:366.5px;width:1.0px;height:1.0px;background:#cfcfcf"></div>
<div class="a" style="left:358.95px;top:366.5px;width:1.0px;height:1.0px;background:#cfcfcf"></div>
<div class="a" style="left:372.4px;top:366.5px;width:1.0px;height:1.0px;background:#cfcfcf"></div>
<div class="a" style="left:385.85px;top:366.5px;width:1.0px;height:1.0px;background:#cfcfcf"></div>
<div class="a" style="left:399.3px;top:366.5px;width:1.0px;height:1.0px;background:#cfcfcf"></div>
<div class="a" style="left:412.75px;top:366.5px;width:1.0px;height:1.0px;background:#cfcfcf"></div>
<div class="a" style="left:426.2px;top:366.5px;width:1.0px;height:1.0px;background:#cfcfcf"></div>
<div class="a" style="left:340px;top:376.2px;width:91.0px;height:3.6px;background:#e3e6e7;border-radius:2px"></div>
<svg class="a" style="left:368.8px;top:371.6px;" width="8" height="13.4" viewBox="0 0 8 13.4"><path d="M0 1.5 Q0 0 1.5 0 H6.5 Q8 0 8 1.5 V9 L4 13.2 L0 9 Z" fill="#0a73d8"/></svg>
<div class="a" style="left:345.5px;top:386.1px;width:1.0px;height:1.0px;background:#cfcfcf"></div>
<div class="a" style="left:358.95px;top:386.1px;width:1.0px;height:1.0px;background:#cfcfcf"></div>
<div class="a" style="left:372.4px;top:386.1px;width:1.0px;height:1.0px;background:#cfcfcf"></div>
<div class="a" style="left:385.85px;top:386.1px;width:1.0px;height:1.0px;background:#cfcfcf"></div>
<div class="a" style="left:399.3px;top:386.1px;width:1.0px;height:1.0px;background:#cfcfcf"></div>
<div class="a" style="left:412.75px;top:386.1px;width:1.0px;height:1.0px;background:#cfcfcf"></div>
<div class="a" style="left:426.2px;top:386.1px;width:1.0px;height:1.0px;background:#cfcfcf"></div>
<div class="a" style="left:443.2px;top:348.6px;width:34.2px;height:18.0px;background:#fff;border:1px solid #e9e9e9;border-radius:3px"></div>
<span class="t" style="transform:scaleX(0.9243);left:450px;top:347.8px;font-size:11px;color:#222;font-weight:700;">1.00</span>
<div class="a" style="left:443.2px;top:369.7px;width:34.2px;height:17.9px;background:#fff;border:1px solid #e9e9e9;border-radius:3px"></div>
<span class="t" style="transform:scaleX(1.0776);left:456.6px;top:368.8px;font-size:11px;color:#222;font-weight:700;">0</span>
<span class="t" style="transform:scaleX(0.7705);left:102.7px;top:398.9px;font-size:10.5px;color:#4a4a4a;font-weight:400;">出力デバイス</span>
<div class="a" style="left:159.6px;top:400.6px;width:226.8px;height:14.2px;background:#fdfdfd;border:1px solid #e4e4e4;border-radius:2px"></div>
<span class="t" style="transform:scaleX(0.9436);left:161.5px;top:398.0px;font-size:10.5px;color:#555;font-weight:400;">スピーカー (Realtek High Definition Audio(SST</span>
<svg class="a" style="left:374.5px;top:405.5px;" width="7" height="5" viewBox="0 0 7 5"><path d="M0.4 0.6 L3.4 3.8 L6.4 0.6" fill="none" stroke="#555" stroke-width="1"/></svg>
<div class="a" style="left:405.2px;top:402.4px;width:12.3px;height:12.3px;background:#f7f7f7;border:1px solid #6a6a6a;border-radius:3px"></div>
<span class="t" style="transform:scaleX(0.8381);left:422.5px;top:398.4px;font-size:10.5px;color:#555;font-weight:400;">小さく表示</span>
<div class="a" style="left:119px;top:428.6px;width:341.7px;height:38.6px;background:#000"></div>
<div class="a" style="left:137.1px;top:478.8px;width:4.0px;height:76.2px;background:#e3e6e7;border-radius:2px"></div>
<div class="a" style="left:149.9px;top:483.9px;width:1.5px;height:1.0px;background:#d6d6d6"></div>
<div class="a" style="left:149.9px;top:500.15px;width:1.5px;height:1.0px;background:#d6d6d6"></div>
<div class="a" style="left:149.9px;top:532.65px;width:1.5px;height:1.0px;background:#d6d6d6"></div>
<div class="a" style="left:149.9px;top:548.9px;width:1.5px;height:1.0px;background:#d6d6d6"></div>
<svg class="a" style="left:130.4px;top:511.1px;" width="19.4" height="11.2" viewBox="0 0 19.4 11.2"><path d="M1.2 0 H13 L19.4 5.6 L13 11.2 H1.2 Q0 11.2 0 10 V1.2 Q0 0 1.2 0 Z" fill="#0a73d8"/></svg>
<span class="t" style="transform:scaleX(0.9719);left:131.7px;top:558.6px;font-size:9.8px;color:#555;font-weight:400;">31</span>
<div class="a" style="left:169.6px;top:478.8px;width:4.0px;height:76.2px;background:#e3e6e7;border-radius:2px"></div>
<div class="a" style="left:182.4px;top:483.9px;width:1.5px;height:1.0px;background:#d6d6d6"></div>
<div class="a" style="left:182.4px;top:500.15px;width:1.5px;height:1.0px;background:#d6d6d6"></div>
<div class="a" style="left:182.4px;top:532.65px;width:1.5px;height:1.0px;background:#d6d6d6"></div>
<div class="a" style="left:182.4px;top:548.9px;width:1.5px;height:1.0px;background:#d6d6d6"></div>
<svg class="a" style="left:162.9px;top:511.1px;" width="19.4" height="11.2" viewBox="0 0 19.4 11.2"><path d="M1.2 0 H13 L19.4 5.6 L13 11.2 H1.2 Q0 11.2 0 10 V1.2 Q0 0 1.2 0 Z" fill="#0a73d8"/></svg>
<span class="t" style="transform:scaleX(0.9811);left:165.2px;top:558.6px;font-size:9.8px;color:#555;font-weight:400;">62</span>
<div class="a" style="left:202.1px;top:478.8px;width:4.0px;height:76.2px;background:#e3e6e7;border-radius:2px"></div>
<div class="a" style="left:214.9px;top:483.9px;width:1.5px;height:1.0px;background:#d6d6d6"></div>
<div class="a" style="left:214.9px;top:500.15px;width:1.5px;height:1.0px;background:#d6d6d6"></div>
<div class="a" style="left:214.9px;top:532.65px;width:1.5px;height:1.0px;background:#d6d6d6"></div>
<div class="a" style="left:214.9px;top:548.9px;width:1.5px;height:1.0px;background:#d6d6d6"></div>
<svg class="a" style="left:195.4px;top:511.1px;" width="19.4" height="11.2" viewBox="0 0 19.4 11.2"><path d="M1.2 0 H13 L19.4 5.6 L13 11.2 H1.2 Q0 11.2 0 10 V1.2 Q0 0 1.2 0 Z" fill="#0a73d8"/></svg>
<span class="t" style="transform:scaleX(0.9658);left:196.2px;top:558.6px;font-size:9.8px;color:#555;font-weight:400;">125</span>
<div class="a" style="left:234.6px;top:478.8px;width:4.0px;height:76.2px;background:#e3e6e7;border-radius:2px"></div>
<div class="a" style="left:247.4px;top:483.9px;width:1.5px;height:1.0px;background:#d6d6d6"></div>
<div class="a" style="left:247.4px;top:500.15px;width:1.5px;height:1.0px;background:#d6d6d6"></div>
<div class="a" style="left:247.4px;top:532.65px;width:1.5px;height:1.0px;background:#d6d6d6"></div>
<div class="a" style="left:247.4px;top:548.9px;width:1.5px;height:1.0px;background:#d6d6d6"></div>
<svg class="a" style="left:227.9px;top:511.1px;" width="19.4" height="11.2" viewBox="0 0 19.4 11.2"><path d="M1.2 0 H13 L19.4 5.6 L13 11.2 H1.2 Q0 11.2 0 10 V1.2 Q0 0 1.2 0 Z" fill="#0a73d8"/></svg>
<span class="t" style="transform:scaleX(0.9719);left:229.7px;top:558.6px;font-size:9.8px;color:#555;font-weight:400;">250</span>
<div class="a" style="left:267.1px;top:478.8px;width:4.0px;height:76.2px;background:#e3e6e7;border-radius:2px"></div>
<div class="a" style="left:279.90000000000003px;top:483.9px;width:1.5px;height:1.0px;background:#d6d6d6"></div>
<div class="a" style="left:279.90000000000003px;top:500.15px;width:1.5px;height:1.0px;background:#d6d6d6"></div>
<div class="a" style="left:279.90000000000003px;top:532.65px;width:1.5px;height:1.0px;background:#d6d6d6"></div>
<div class="a" style="left:279.90000000000003px;top:548.9px;width:1.5px;height:1.0px;background:#d6d6d6"></div>
<svg class="a" style="left:260.40000000000003px;top:511.1px;" width="19.4" height="11.2" viewBox="0 0 19.4 11.2"><path d="M1.2 0 H13 L19.4 5.6 L13 11.2 H1.2 Q0 11.2 0 10 V1.2 Q0 0 1.2 0 Z" fill="#0a73d8"/></svg>
<span class="t" style="transform:scaleX(0.9719);left:263.2px;top:558.6px;font-size:9.8px;color:#555;font-weight:400;">500</span>
<div class="a" style="left:299.6px;top:478.8px;width:4.0px;height:76.2px;background:#e3e6e7;border-radius:2px"></div>
<div class="a" style="left:312.40000000000003px;top:483.9px;width:1.5px;height:1.0px;background:#d6d6d6"></div>
<div class="a" style="left:312.40000000000003px;top:500.15px;width:1.5px;height:1.0px;background:#d6d6d6"></div>
<div class="a" style="left:312.40000000000003px;top:532.65px;width:1.5px;height:1.0px;background:#d6d6d6"></div>
<div class="a" style="left:312.40000000000003px;top:548.9px;width:1.5px;height:1.0px;background:#d6d6d6"></div>
<svg class="a" style="left:292.90000000000003px;top:511.1px;" width="19.4" height="11.2" viewBox="0 0 19.4 11.2"><path d="M1.2 0 H13 L19.4 5.6 L13 11.2 H1.2 Q0 11.2 0 10 V1.2 Q0 0 1.2 0 Z" fill="#0a73d8"/></svg>
<span class="t" style="transform:scaleX(1.0329);left:299.4px;top:558.6px;font-size:9.8px;color:#555;font-weight:400;">1k</span>
<div class="a" style="left:332.1px;top:478.8px;width:4.0px;height:76.2px;background:#e3e6e7;border-radius:2px"></div>
<div class="a" style="left:344.90000000000003px;top:483.9px;width:1.5px;height:1.0px;background:#d6d6d6"></div>
<div class="a" style="left:344.90000000000003px;top:500.15px;width:1.5px;height:1.0px;background:#d6d6d6"></div>
<div class="a" style="left:344.90000000000003px;top:532.65px;width:1.5px;height:1.0px;background:#d6d6d6"></div>
<div class="a" style="left:344.90000000000003px;top:548.9px;width:1.5px;height:1.0px;background:#d6d6d6"></div>
<svg class="a" style="left:325.40000000000003px;top:511.1px;" width="19.4" height="11.2" viewBox="0 0 19.4 11.2"><path d="M1.2 0 H13 L19.4 5.6 L13 11.2 H1.2 Q0 11.2 0 10 V1.2 Q0 0 1.2 0 Z" fill="#0a73d8"/></svg>
<span class="t" style="transform:scaleX(1.0232);left:333.0px;top:558.6px;font-size:9.8px;color:#555;font-weight:400;">2k</span>
<div class="a" style="left:364.6px;top:478.8px;width:4.0px;height:76.2px;background:#e3e6e7;border-radius:2px"></div>
<div class="a" style="left:377.40000000000003px;top:483.9px;width:1.5px;height:1.0px;background:#d6d6d6"></div>
<div class="a" style="left:377.40000000000003px;top:500.15px;width:1.5px;height:1.0px;background:#d6d6d6"></div>
<div class="a" style="left:377.40000000000003px;top:532.65px;width:1.5px;height:1.0px;background:#d6d6d6"></div>
<div class="a" style="left:377.40000000000003px;top:548.9px;width:1.5px;height:1.0px;background:#d6d6d6"></div>
<svg class="a" style="left:357.90000000000003px;top:511.1px;" width="19.4" height="11.2" viewBox="0 0 19.4 11.2"><path d="M1.2 0 H13 L19.4 5.6 L13 11.2 H1.2 Q0 11.2 0 10 V1.2 Q0 0 1.2 0 Z" fill="#0a73d8"/></svg>
<span class="t" style="transform:scaleX(1.0232);left:366.5px;top:558.6px;font-size:9.8px;color:#555;font-weight:400;">4k</span>
<div class="a" style="left:397.1px;top:478.8px;width:4.0px;height:76.2px;background:#e3e6e7;border-radius:2px"></div>
<div class="a" style="left:409.90000000000003px;top:483.9px;width:1.5px;height:1.0px;background:#d6d6d6"></div>
<div class="a" style="left:409.90000000000003px;top:500.15px;width:1.5px;height:1.0px;background:#d6d6d6"></div>
<div class="a" style="left:409.90000000000003px;top:532.65px;width:1.5px;height:1.0px;background:#d6d6d6"></div>
<div class="a" style="left:409.90000000000003px;top:548.9px;width:1.5px;height:1.0px;background:#d6d6d6"></div>
<svg class="a" style="left:390.40000000000003px;top:511.1px;" width="19.4" height="11.2" viewBox="0 0 19.4 11.2"><path d="M1.2 0 H13 L19.4 5.6 L13 11.2 H1.2 Q0 11.2 0 10 V1.2 Q0 0 1.2 0 Z" fill="#0a73d8"/></svg>
<span class="t" style="transform:scaleX(1.0232);left:400.1px;top:558.6px;font-size:9.8px;color:#555;font-weight:400;">8k</span>
<div class="a" style="left:429.6px;top:478.8px;width:4.0px;height:76.2px;background:#e3e6e7;border-radius:2px"></div>
<div class="a" style="left:442.40000000000003px;top:483.9px;width:1.5px;height:1.0px;background:#d6d6d6"></div>
<div class="a" style="left:442.40000000000003px;top:500.15px;width:1.5px;height:1.0px;background:#d6d6d6"></div>
<div class="a" style="left:442.40000000000003px;top:532.65px;width:1.5px;height:1.0px;background:#d6d6d6"></div>
<div class="a" style="left:442.40000000000003px;top:548.9px;width:1.5px;height:1.0px;background:#d6d6d6"></div>
<svg class="a" style="left:422.90000000000003px;top:511.1px;" width="19.4" height="11.2" viewBox="0 0 19.4 11.2"><path d="M1.2 0 H13 L19.4 5.6 L13 11.2 H1.2 Q0 11.2 0 10 V1.2 Q0 0 1.2 0 Z" fill="#0a73d8"/></svg>
<span class="t" style="transform:scaleX(1.0065);left:431.0px;top:558.6px;font-size:9.8px;color:#555;font-weight:400;">16k</span>
<div class="a" style="left:104px;top:598.4px;width:71.0px;height:16.8px;background:#fdfdfd;border:1px solid #e3e3e3;border-bottom-color:#d2d2d2;border-radius:3.5px"></div>
<span class="t" style="transform:scaleX(0.8071);left:115px;top:597.0px;font-size:10.5px;color:#555;font-weight:400;">EQ リセット</span>
<div class="a" style="left:107.4px;top:637.2px;width:12.0px;height:11.8px;background:#f7f7f7;border:1px solid #6a6a6a;border-radius:3px"></div>
<span class="t" style="transform:scaleX(0.8457);left:122.6px;top:632.8px;font-size:10.5px;color:#555;font-weight:400;">モノラル化</span>
<div class="a" style="left:192.3px;top:602.4px;width:286.9px;height:76.8px;border:1px solid #e2e2e2"></div>
<div class="a" style="left:195px;top:594px;width:146.5px;height:16.0px;background:#f0f0f0"></div>
<span class="t" style="transform:scaleX(0.8738);left:196.6px;top:592.3px;font-size:10.5px;color:#555;font-weight:400;">ノイズ軽減処理(ローパスフィルタ)</span>
<div class="a" style="left:349.8px;top:611.5px;width:12.8px;height:12.4px;background:#0a66c8;border-radius:3px"></div>
<svg class="a" style="left:352px;top:614px;" width="9" height="8" viewBox="0 0 9 8"><path d="M1 4 L3.4 6.4 L7.8 1.4" fill="none" stroke="#fff" stroke-width="1.2"/></svg>
<span class="t" style="transform:scaleX(0.9213);left:366.3px;top:607.6px;font-size:10.5px;color:#4a4a4a;font-weight:400;">ノイズ軽減を適用</span>
<span class="t" style="transform:scaleX(1.0158);left:201.8px;top:628.9px;font-size:10.5px;color:#555;font-weight:400;">周波数: 10000 Hz</span>
<span class="t" style="transform:scaleX(1.0720);left:201.8px;top:652.8px;font-size:10.5px;color:#555;font-weight:400;">減衰率: -40 dB</span>
<div class="a" style="left:302px;top:635.8px;width:147.0px;height:3.6px;background:#e3e6e7;border-radius:2px"></div>
<svg class="a" style="left:371px;top:629.8px;" width="9" height="15.8" viewBox="0 0 9 15.8"><path d="M0 1.5 Q0 0 1.5 0 H7.5 Q9 0 9 1.5 V11 L4.5 15.8 L0 11 Z" fill="#0a73d8"/></svg>
<div class="a" style="left:306.2px;top:646.5999999999999px;width:1.0px;height:2.0px;background:#d4d4d4"></div>
<div class="a" style="left:323.5px;top:646.5999999999999px;width:1.0px;height:2.0px;background:#d4d4d4"></div>
<div class="a" style="left:340.8px;top:646.5999999999999px;width:1.0px;height:2.0px;background:#d4d4d4"></div>
<div class="a" style="left:358.1px;top:646.5999999999999px;width:1.0px;height:2.0px;background:#d4d4d4"></div>
<div class="a" style="left:375.4px;top:646.5999999999999px;width:1.0px;height:2.0px;background:#d4d4d4"></div>
<div class="a" style="left:392.7px;top:646.5999999999999px;width:1.0px;height:2.0px;background:#d4d4d4"></div>
<div class="a" style="left:410.0px;top:646.5999999999999px;width:1.0px;height:2.0px;background:#d4d4d4"></div>
<div class="a" style="left:427.3px;top:646.5999999999999px;width:1.0px;height:2.0px;background:#d4d4d4"></div>
<div class="a" style="left:444.6px;top:646.5999999999999px;width:1.0px;height:2.0px;background:#d4d4d4"></div>
<div class="a" style="left:302px;top:659.2px;width:147.0px;height:3.6px;background:#e3e6e7;border-radius:2px"></div>
<svg class="a" style="left:371px;top:653.3px;" width="9" height="15.8" viewBox="0 0 9 15.8"><path d="M0 1.5 Q0 0 1.5 0 H7.5 Q9 0 9 1.5 V11 L4.5 15.8 L0 11 Z" fill="#0a73d8"/></svg>
<div class="a" style="left:306.2px;top:670.0px;width:1.0px;height:2.0px;background:#d4d4d4"></div>
<div class="a" style="left:323.5px;top:670.0px;width:1.0px;height:2.0px;background:#d4d4d4"></div>
<div class="a" style="left:340.8px;top:670.0px;width:1.0px;height:2.0px;background:#d4d4d4"></div>
<div class="a" style="left:358.1px;top:670.0px;width:1.0px;height:2.0px;background:#d4d4d4"></div>
<div class="a" style="left:375.4px;top:670.0px;width:1.0px;height:2.0px;background:#d4d4d4"></div>
<div class="a" style="left:392.7px;top:670.0px;width:1.0px;height:2.0px;background:#d4d4d4"></div>
<div class="a" style="left:410.0px;top:670.0px;width:1.0px;height:2.0px;background:#d4d4d4"></div>
<div class="a" style="left:427.3px;top:670.0px;width:1.0px;height:2.0px;background:#d4d4d4"></div>
<div class="a" style="left:444.6px;top:670.0px;width:1.0px;height:2.0px;background:#d4d4d4"></div>
<div class="a" style="left:149.4px;top:254px;width:183.8px;height:142.8px;background:#fdfdfd;border:1px solid #bdbdbd;box-shadow:2px 2px 3px rgba(0,0,0,.35)"></div>
<div class="a" style="left:150.4px;top:255px;width:12.6px;height:140.8px;background:#f5f5f5"></div>
<div class="a" style="left:149.4px;top:236px;width:62.1px;height:19.0px;background:#fdfdfd;border:1px solid #bdbdbd;border-bottom:none"></div>
<span class="t" style="transform:scaleX(0.9246);left:155px;top:235.0px;font-size:12px;color:#1f1f1f;font-weight:400;">ﾌﾟﾚｰﾔｰ</span>
<span class="t" style="transform:scaleX(0.9357);left:189.2px;top:235.0px;font-size:12.5px;color:#1f1f1f;font-weight:400;">(P)</span>
<span class="t" style="transform:scaleX(0.9289);left:169px;top:254.5px;font-size:12px;color:#1f1f1f;font-weight:400;">再生・停止(P)</span>
<span class="t" style="transform:scaleX(0.9355);left:169px;top:273.2px;font-size:12px;color:#1f1f1f;font-weight:400;">リセット(R)</span>
<div class="a" style="left:165px;top:294px;width:167.0px;height:1.0px;background:#d9d9d9"></div>
<span class="t" style="transform:scaleX(0.9332);left:169px;top:295.2px;font-size:12px;color:#1f1f1f;font-weight:400;">リピートA点の指定(A)</span>
<span class="t" style="transform:scaleX(0.9332);left:169px;top:314.0px;font-size:12px;color:#1f1f1f;font-weight:400;">リピートB点の指定(B)</span>
<div class="a" style="left:144px;top:332.2px;width:192.8px;height:27.3px;background:#f57c1f"></div>
<div class="a" style="left:148.6px;top:336.8px;width:183.4px;height:18.2px;background:#b7d7f3;border-left:1.4px solid #3d8be0"></div>
<span class="t" style="transform:scaleX(0.9275);left:169px;top:335.6px;font-size:12px;color:#1a1a1a;font-weight:400;">カウンターコピー(C)</span>
<span class="t" style="transform:scaleX(0.9363);left:169px;top:354.9px;font-size:12px;color:#1f1f1f;font-weight:400;">カウンター指定(Z)</span>
<div class="a" style="left:165px;top:376px;width:167.0px;height:1.0px;background:#d9d9d9"></div>
<span class="t" style="transform:scaleX(0.9333);left:169px;top:376.9px;font-size:12px;color:#1f1f1f;font-weight:400;">音声ファイル時間コピー(T)</span>
</div>
</body></html>
